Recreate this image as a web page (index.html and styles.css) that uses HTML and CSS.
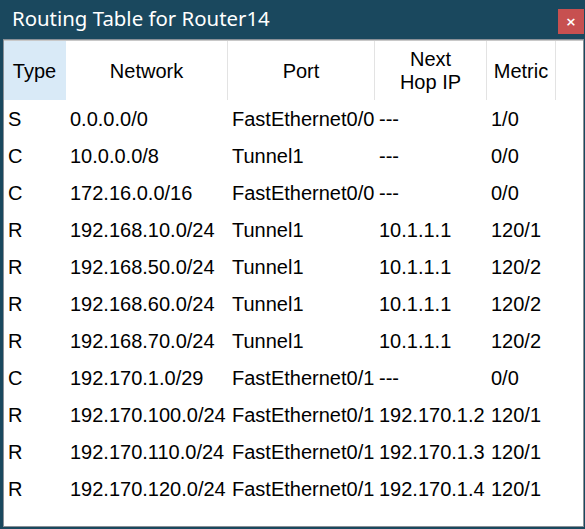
FILE: index.html
```html
<!DOCTYPE html>
<html>
<head>
<meta charset="utf-8">
<link rel="stylesheet" href="styles.css">
</head>
<body>
<div class="window">
  <div class="titlebar">
    <span class="title">Routing Table for Router14</span>
    <span class="close">×</span>
  </div>
  <div class="content">
    <div class="table">
      <div class="th sorted">Type</div>
      <div class="th">Network</div>
      <div class="th">Port</div>
      <div class="th">Next<br>Hop IP</div>
      <div class="th">Metric</div>

      <div class="td">S</div><div class="td">0.0.0.0/0</div><div class="td">FastEthernet0/0</div><div class="td">---</div><div class="td">1/0</div>
      <div class="td">C</div><div class="td">10.0.0.0/8</div><div class="td">Tunnel1</div><div class="td">---</div><div class="td">0/0</div>
      <div class="td">C</div><div class="td">172.16.0.0/16</div><div class="td">FastEthernet0/0</div><div class="td">---</div><div class="td">0/0</div>
      <div class="td">R</div><div class="td">192.168.10.0/24</div><div class="td">Tunnel1</div><div class="td">10.1.1.1</div><div class="td">120/1</div>
      <div class="td">R</div><div class="td">192.168.50.0/24</div><div class="td">Tunnel1</div><div class="td">10.1.1.1</div><div class="td">120/2</div>
      <div class="td">R</div><div class="td">192.168.60.0/24</div><div class="td">Tunnel1</div><div class="td">10.1.1.1</div><div class="td">120/2</div>
      <div class="td">R</div><div class="td">192.168.70.0/24</div><div class="td">Tunnel1</div><div class="td">10.1.1.1</div><div class="td">120/2</div>
      <div class="td">C</div><div class="td">192.170.1.0/29</div><div class="td">FastEthernet0/1</div><div class="td">---</div><div class="td">0/0</div>
      <div class="td">R</div><div class="td">192.170.100.0/24</div><div class="td">FastEthernet0/1</div><div class="td">192.170.1.2</div><div class="td">120/1</div>
      <div class="td">R</div><div class="td">192.170.110.0/24</div><div class="td">FastEthernet0/1</div><div class="td">192.170.1.3</div><div class="td">120/1</div>
      <div class="td">R</div><div class="td">192.170.120.0/24</div><div class="td">FastEthernet0/1</div><div class="td">192.170.1.4</div><div class="td">120/1</div>
    </div>
  </div>
</div>
</body>
</html>
```

FILE: styles.css
```css
html, body {
  margin: 0;
  padding: 0;
}
body {
  width: 585px;
  height: 529px;
  overflow: hidden;
  background: #1a485e;
}
.window {
  width: 585px;
  height: 529px;
  box-sizing: border-box;
  background: #1a485e;
  padding: 0 1px 2px 3px;
  display: flex;
  flex-direction: column;
}
.titlebar {
  height: 39px;
  flex: none;
  display: flex;
  align-items: flex-start;
  justify-content: space-between;
}
.title {
  font-family: "Noto Sans", "Open Sans", sans-serif;
  font-size: 20.4px;
  color: #ffffff;
  margin: 4px 0 0 9px;
  line-height: 28px;
}
.close {
  width: 26px;
  height: 25px;
  margin-top: 9px;
  background: #c75050;
  color: #ffffff;
  font-family: "DejaVu Sans", sans-serif;
  font-weight: bold;
  font-size: 13px;
  line-height: 25px;
  text-align: center;
}
.content {
  flex: 1;
  background: #ffffff;
  border: 1px solid #8a9097;
  box-shadow: inset 0 1px 0 #c8c8c8;
  padding: 1px 0 0 0;
  font-family: "Liberation Sans", Arial, sans-serif;
  font-size: 20px;
  color: #000000;
}
.table {
  display: grid;
  grid-template-columns: 62px 162px 147px 112px 69px;
  grid-auto-rows: 37px;
  grid-template-rows: 59px;
}
.th {
  display: flex;
  align-items: center;
  justify-content: center;
  text-align: center;
  line-height: 23px;
  border-right: 1px solid #e3e3e3;
  padding-top: 1px;
}
.th.sorted {
  background: #d9eaf7;
  border-right-color: #d9eaf7;
}
.td {
  display: flex;
  align-items: center;
  padding-left: 4px;
  white-space: nowrap;
  padding-top: 1px;
}
```
